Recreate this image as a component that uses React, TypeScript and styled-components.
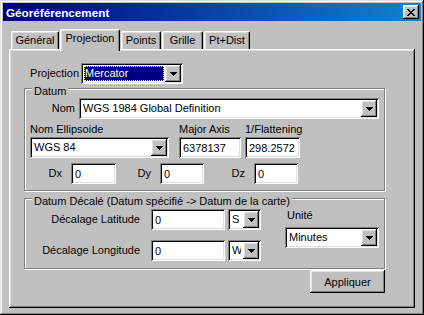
import styled, { createGlobalStyle } from 'styled-components';

const GlobalStyle = createGlobalStyle`
  html, body {
    margin: 0;
    padding: 0;
    background: #c0c0c0;
  }
  * {
    box-sizing: border-box;
  }
`;

const raised = `
  box-shadow: inset -1px -1px #000, inset 1px 1px #fff, inset -2px -2px #808080, inset 2px 2px #dfdfdf;
`;

const sunken = `
  box-shadow: inset 1px 1px #808080, inset -1px -1px #fff, inset 2px 2px #000, inset -2px -2px #dfdfdf;
`;

const TABS = [
  { label: 'Général', width: 48 },
  { label: 'Projection', width: 60, active: true },
  { label: 'Points', width: 40 },
  { label: 'Grille', width: 41 },
  { label: 'Pt+Dist', width: 46 },
];

function Arrow() {
  return (
    <svg width="7" height="4" viewBox="0 0 7 4" shapeRendering="crispEdges">
      <path d="M0 0h7v1h-7z M1 1h5v1h-5z M2 2h3v1h-3z M3 3h1v1h-1z" fill="#000" />
    </svg>
  );
}

function CloseGlyph() {
  return (
    <svg width="8" height="7" viewBox="0 0 8 7" shapeRendering="crispEdges">
      <path
        d="M0 0h2v1h-2z M6 0h2v1h-2z M1 1h2v1h-2z M5 1h2v1h-2z M2 2h4v1h-4z M3 3h2v1h-2z M2 4h4v1h-4z M1 5h2v1h-2z M5 5h2v1h-2z M0 6h2v1h-2z M6 6h2v1h-2z"
        fill="#000"
      />
    </svg>
  );
}

type ComboProps = {
  value: string;
  width: number;
  selected?: boolean;
};

function Combo({ value, width, selected }: ComboProps) {
  return (
    <StyledCombo $w={width}>
      <ComboValue $selected={selected}>{value}</ComboValue>
      <DropButton>
        <Arrow />
      </DropButton>
    </StyledCombo>
  );
}

function Edit({ value, width }: { value: string; width: number }) {
  return <StyledEdit $w={width} value={value} readOnly />;
}

export default function App() {
  return (
    <>
      <GlobalStyle />
      <Window>
        <TitleBar>
          <Title>Géoréférencement</Title>
          <CloseButton>
            <CloseGlyph />
          </CloseButton>
        </TitleBar>
        <Body>
          <TabStrip>
            {TABS.map((t) => (
              <Tab key={t.label} $w={t.width} $active={!!t.active}>
                {t.label}
              </Tab>
            ))}
          </TabStrip>
          <Panel>
            <Content>
              <ProjectionRow>
                <Label>Projection</Label>
                <Combo value="Mercator" width={102} selected />
              </ProjectionRow>

              <GroupBox $pad="9px 0 6px 0">
                <Legend>Datum</Legend>
                <NomRow>
                  <Label>Nom</Label>
                  <Combo value="WGS 1984 Global Definition" width={300} />
                </NomRow>
                <EllipsoidRow>
                  <div>
                    <TopLabel>Nom Ellipsoide</TopLabel>
                    <Combo value="WGS 84" width={139} />
                  </div>
                  <div>
                    <TopLabel>Major Axis</TopLabel>
                    <Edit value="6378137" width={62} />
                  </div>
                  <div>
                    <TopLabel>1/Flattening</TopLabel>
                    <Edit value="298.2572" width={55} />
                  </div>
                </EllipsoidRow>
                <DeltaRow>
                  <Label>Dx</Label>
                  <Edit value="0" width={45} />
                  <Label>Dy</Label>
                  <Edit value="0" width={44} />
                  <Label>Dz</Label>
                  <Edit value="0" width={44} />
                </DeltaRow>
              </GroupBox>

              <ShiftGroup $pad="10px 0 7px 0">
                <Legend>Datum Décalé (Datum spécifié -&gt; Datum de la carte)</Legend>
                <OffsetGrid>
                  <OffsetLabel>Décalage Latitude</OffsetLabel>
                  <Edit value="0" width={74} />
                  <Combo value="S" width={33} />
                  <OffsetLabel>Décalage Longitude</OffsetLabel>
                  <Edit value="0" width={74} />
                  <Combo value="W" width={33} />
                </OffsetGrid>
                <UnitColumn>
                  <UnitLabel>Unité</UnitLabel>
                  <Combo value="Minutes" width={94} />
                </UnitColumn>
              </ShiftGroup>

              <ButtonRow>
                <PushButton>Appliquer</PushButton>
              </ButtonRow>
            </Content>
          </Panel>
        </Body>
      </Window>
    </>
  );
}

const Window = styled.div`
  width: 424px;
  height: 315px;
  padding: 3px;
  display: flex;
  flex-direction: column;
  background: #c0c0c0;
  color: #000;
  font-family: 'Liberation Sans', Arial, sans-serif;
  font-size: 11px;
  box-shadow: inset -1px -1px #000, inset 1px 1px #dfdfdf, inset -2px -2px #808080, inset 2px 2px #fff;
`;

const TitleBar = styled.div`
  height: 18px;
  flex-shrink: 0;
  display: flex;
  align-items: center;
  justify-content: space-between;
  padding: 0 2px 0 3px;
  background: linear-gradient(90deg, #000080, #1084d0);
`;

const Title = styled.span`
  color: #fff;
  font-weight: bold;
  font-size: 11.7px;
  line-height: 13px;
`;

const CloseButton = styled.div`
  width: 16px;
  height: 14px;
  display: flex;
  align-items: center;
  justify-content: center;
  background: #c0c0c0;
  ${raised}
`;

const Body = styled.div`
  display: flex;
  flex-direction: column;
  padding: 8px 6px 4px 6px;
`;

const TabStrip = styled.div`
  height: 20px;
  display: flex;
  align-items: flex-end;
  gap: 1px;
  padding-left: 2px;
`;

const Tab = styled.div<{ $w: number; $active: boolean }>`
  position: relative;
  z-index: ${({ $active }) => ($active ? 1 : 0)};
  width: ${({ $w }) => $w}px;
  height: ${({ $active }) => ($active ? 22 : 18)}px;
  margin-bottom: ${({ $active }) => ($active ? -2 : 0)}px;
  padding-top: 2px;
  text-align: center;
  line-height: 13px;
  background: #c0c0c0;
  border-top: 1px solid #fff;
  border-left: 1px solid #fff;
  border-right: 1px solid #000;
  border-radius: 2px 2px 0 0;
  box-shadow: inset -1px 0 #808080, inset 1px 1px #dfdfdf;
`;

const Panel = styled.div`
  height: 259px;
  padding: 14px 0 0 15px;
  background: #c0c0c0;
  box-shadow: inset -1px -1px #000, inset 1px 1px #fff, inset -2px -2px #808080, inset 2px 2px #dfdfdf;
`;

const Content = styled.div`
  width: 361px;
  display: flex;
  flex-direction: column;
`;

const Label = styled.span`
  line-height: 21px;
  text-align: right;
  white-space: nowrap;
`;

const TopLabel = styled.div`
  line-height: 13px;
  margin-bottom: 1px;
  white-space: nowrap;
`;

const ProjectionRow = styled.div`
  display: grid;
  grid-template-columns: 55px 102px;
  column-gap: 2px;
  height: 21px;
`;

const StyledCombo = styled.div<{ $w: number }>`
  width: ${({ $w }) => $w}px;
  height: 21px;
  padding: 2px;
  display: flex;
  background: #fff;
  ${sunken}
`;

const ComboValue = styled.div<{ $selected?: boolean }>`
  flex: 1;
  min-width: 0;
  margin: 1px;
  border: 1px dotted ${({ $selected }) => ($selected ? '#ffff80' : 'transparent')};
  background: ${({ $selected }) => ($selected ? '#000080' : 'transparent')};
  color: ${({ $selected }) => ($selected ? '#fff' : '#000')};
  line-height: 13px;
  white-space: nowrap;
  overflow: hidden;
`;

const DropButton = styled.div`
  width: 16px;
  height: 17px;
  flex-shrink: 0;
  display: flex;
  align-items: center;
  justify-content: center;
  background: #c0c0c0;
  ${raised}
`;

const StyledEdit = styled.input<{ $w: number }>`
  width: ${({ $w }) => $w}px;
  height: 21px;
  margin: 0;
  padding: 0 0 0 4px;
  border: none;
  outline: none;
  background: #fff;
  color: #000;
  font: inherit;
  line-height: 13px;
  ${sunken}
`;

const GroupBox = styled.div<{ $pad: string }>`
  position: relative;
  margin-top: 4px;
  padding: ${({ $pad }) => $pad};
  border: 1px solid #808080;
  box-shadow: inset 1px 1px #fff, 1px 1px #fff;
`;

const ShiftGroup = styled(GroupBox)`
  margin-top: 7px;
  display: flex;
`;

const Legend = styled.div`
  position: absolute;
  top: -4px;
  left: 7px;
  padding: 0 2px;
  line-height: 13px;
  background: #c0c0c0;
  white-space: nowrap;
`;

const NomRow = styled.div`
  display: grid;
  grid-template-columns: 50px 300px;
  column-gap: 4px;
`;

const EllipsoidRow = styled.div`
  margin-top: 4px;
  padding-left: 5px;
  display: grid;
  grid-template-columns: 149px 66px 55px;
`;

const DeltaRow = styled.div`
  margin-top: 5px;
  display: grid;
  grid-template-columns: 37px 45px 26px 44px 32px 44px;
  column-gap: 9px;
`;

const OffsetGrid = styled.div`
  display: grid;
  grid-template-columns: 126px 77px 33px;
  row-gap: 10px;
`;

const OffsetLabel = styled(Label)`
  padding-right: 11px;
`;

const UnitColumn = styled.div`
  margin-left: 24px;
  display: flex;
  flex-direction: column;
`;

const UnitLabel = styled.div`
  line-height: 13px;
  padding-left: 2px;
  margin-bottom: 5px;
`;

const ButtonRow = styled.div`
  margin-top: 1px;
  display: flex;
  justify-content: flex-end;
`;

const PushButton = styled.div`
  width: 75px;
  height: 23px;
  display: flex;
  align-items: center;
  justify-content: center;
  background: #c0c0c0;
  ${raised}
`;
